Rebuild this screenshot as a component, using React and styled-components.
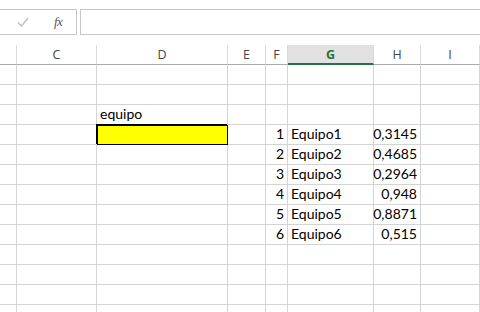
import React from 'react';
import styled, { createGlobalStyle } from 'styled-components';

const GlobalStyle = createGlobalStyle`
  html, body {
    margin: 0;
    padding: 0;
    background: #fff;
    overflow: hidden;
  }
`;

const columns = [
   { key: 'B', label: '', width: 17 },
   { key: 'C', label: 'C', width: 80 },
   { key: 'D', label: 'D', width: 131 },
   { key: 'E', label: 'E', width: 38 },
   { key: 'F', label: 'F', width: 22 },
   { key: 'G', label: 'G', width: 86, active: true },
   { key: 'H', label: 'H', width: 47 },
   { key: 'I', label: 'I', width: 80 },
];

const teams = [
   ['1', 'Equipo1', '0,3145'],
   ['2', 'Equipo2', '0,4685'],
   ['3', 'Equipo3', '0,2964'],
   ['4', 'Equipo4', '0,948'],
   ['5', 'Equipo5', '0,8871'],
   ['6', 'Equipo6', '0,515'],
];

const Wrapper = styled.div`
  width: 480px;
  height: 312px;
  overflow: hidden;
  background: #fff;
`;

const FormulaBar = styled.div`
  display: flex;
  gap: 3px;
  padding-top: 9px;
  height: 36px;
  box-sizing: border-box;
`;

const NameTools = styled.div`
  width: 78px;
  height: 26px;
  margin-left: -1px;
  box-sizing: border-box;
  border: 1px solid #c6c6c6;
  display: flex;
  align-items: center;
`;

const Check = styled.svg`
  margin-left: 17px;
  width: 12px;
  height: 10px;
`;

const Fx = styled.span`
  margin-left: 25px;
  font-family: "Liberation Serif", serif;
  font-style: italic;
  font-size: 13px;
  color: #555;
  letter-spacing: -0.5px;
`;

const FormulaInput = styled.div`
  flex: 1;
  height: 26px;
  margin-right: -2px;
  box-sizing: border-box;
  border: 1px solid #c6c6c6;
`;

const Sheet = styled.div`
  margin-top: 9px;
  display: grid;
  grid-template-columns: ${({ $cols }) => $cols};
`;

const Header = styled.div`
  height: 20px;
  box-sizing: border-box;
  border-right: 1px solid #d9d9d9;
  border-bottom: ${({ $active }) => ($active ? '2px solid #217346' : '1px solid #ababab')};
  background: ${({ $active }) => ($active ? '#e1e1e1' : '#fff')};
  color: ${({ $active }) => ($active ? '#217346' : '#444')};
  font-family: "Open Sans", sans-serif;
  font-weight: ${({ $active }) => ($active ? 700 : 400)};
  font-size: 12.5px;
  display: flex;
  align-items: center;
  justify-content: center;
  padding-bottom: ${({ $active }) => ($active ? '0' : '1px')};
`;

const Cell = styled.div`
  height: 20px;
  box-sizing: border-box;
  border-right: 1px solid #d4d4d4;
  border-bottom: 1px solid #d4d4d4;
  font-family: "Lato", "Liberation Sans", sans-serif;
  font-size: 14px;
  color: #000;
  display: flex;
  align-items: flex-end;
  justify-content: ${({ $right }) => ($right ? 'flex-end' : 'flex-start')};
  padding: 0 3px 2px 3px;
  padding-right: ${({ $right }) => ($right ? '3px' : '3px')};
  white-space: nowrap;
  overflow: visible;
`;

const Filled = styled(Cell)`
  background: #ffff00;
  outline: 1px solid #000;
  outline-offset: -1px;
  position: relative;
  box-shadow: -1px -1px 0 0 #000;
`;

const rowContent = (r) => {
   const row = {};
   if (r === 2) row.D = { text: 'equipo' };
   if (r === 3) row.D = { fill: true };
   const t = teams[r - 3];
   if (t) {
      row.F = { text: t[0], right: true };
      row.G = { text: t[1] };
      row.H = { text: t[2], right: true };
   }
   return row;
};

const App = () => {
   const cols = columns.map(c => c.width === 80 && c.key === 'I' ? '1fr' : `${c.width}px`).join(' ');
   const rows = Array.from({ length: 13 }, (_, i) => i);

   return <>
      <GlobalStyle />
      <Wrapper>
         <FormulaBar>
            <NameTools>
               <Check viewBox="0 0 12 10">
                  <path d="M1 5.5 L4.5 9 L11 1" fill="none" stroke="#c3c3c3" strokeWidth="1.6" />
               </Check>
               <Fx>fx</Fx>
            </NameTools>
            <FormulaInput />
         </FormulaBar>
         <Sheet $cols={cols}>
            {columns.map(c => (
               <Header key={c.key} $active={c.active}>{c.label}</Header>
            ))}
            {rows.map(r => {
               const content = rowContent(r);
               return columns.map(c => {
                  const item = content[c.key];
                  if (item && item.fill) {
                     return <Filled key={`${r}-${c.key}`} />;
                  }
                  return (
                     <Cell key={`${r}-${c.key}`} $right={item && item.right}>
                        {item ? item.text : ''}
                     </Cell>
                  );
               });
            })}
         </Sheet>
      </Wrapper>
   </>;
};

export default App;
